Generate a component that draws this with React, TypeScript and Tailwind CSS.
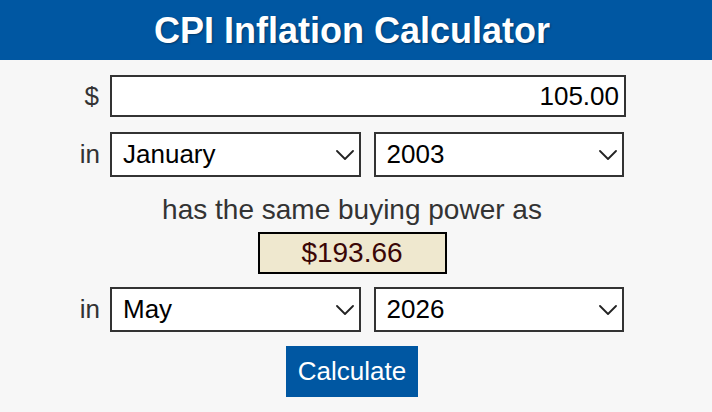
import React, { useState } from 'react';

const months = [
  'January', 'February', 'March', 'April', 'May', 'June',
  'July', 'August', 'September', 'October', 'November', 'December',
];

const years = Array.from({ length: 2026 - 1913 + 1 }, (_, i) => String(2026 - i));

const Chevron = () => (
  <svg
    className="pointer-events-none absolute right-[7px] top-1/2 -translate-y-1/2"
    width="18"
    height="10"
    viewBox="0 0 18 10"
    fill="none"
  >
    <path d="M1 1l8 8 8-8" stroke="#222" strokeWidth="1.8" strokeLinecap="round" strokeLinejoin="round" />
  </svg>
);

interface PickerProps {
  value: string;
  options: string[];
  onChange: (v: string) => void;
}

const Picker: React.FC<PickerProps> = ({ value, options, onChange }) => (
  <div className="relative flex-1">
    <select
      value={value}
      onChange={(e) => onChange(e.target.value)}
      className="block h-[45px] w-full appearance-none rounded-none border-2 border-[#333] bg-white pl-[11px] text-[26px] text-black outline-none"
    >
      {options.map((o) => (
        <option key={o} value={o}>{o}</option>
      ))}
    </select>
    <Chevron />
  </div>
);

export default function App() {
  const [amount, setAmount] = useState('105.00');
  const [fromMonth, setFromMonth] = useState('January');
  const [fromYear, setFromYear] = useState('2003');
  const [toMonth, setToMonth] = useState('May');
  const [toYear, setToYear] = useState('2026');

  return (
    <div className="min-h-[412px] w-[712px] bg-[#f7f7f7] font-['Liberation_Sans',Arial,sans-serif]">
      <header className="flex h-[60px] items-center justify-center bg-[#0057a2] pr-[8px] pt-[2px]">
        <h1 className="text-[36px] font-bold leading-none text-white [text-shadow:1px_1px_2px_rgba(0,0,0,0.35)]">
          CPI Inflation Calculator
        </h1>
      </header>

      <main className="flex w-[704px] flex-col items-center pt-[15px]">
        {/* amount */}
        <div className="mr-[8px] flex w-[556px] items-center">
          <span className="w-[30px] pr-[1px] text-right text-[26px] text-[#333]">$</span>
          <input
            value={amount}
            onChange={(e) => setAmount(e.target.value)}
            className="ml-[10px] h-[42px] flex-1 rounded-none border-2 border-[#333] bg-white pr-[5px] text-right text-[26px] text-black outline-none"
          />
        </div>

        {/* from date */}
        <div className="mr-[8px] mt-[15px] flex w-[556px] items-center">
          <span className="w-[30px] text-right text-[26px] text-[#333]">in</span>
          <div className="ml-[10px] mr-[2px] flex flex-1 gap-[13px]">
            <Picker value={fromMonth} options={months} onChange={setFromMonth} />
            <Picker value={fromYear} options={years} onChange={setFromYear} />
          </div>
        </div>

        <p className="mt-[17px] text-[28px] leading-[32px] text-[#333]">has the same buying power as</p>

        <div className="mt-[6px] flex h-[42px] w-[189px] items-center justify-center border-2 border-black bg-[#efe8cf] text-[28px] text-[#3a0606]">
          $193.66
        </div>

        {/* to date */}
        <div className="mr-[8px] mt-[13px] flex w-[556px] items-center">
          <span className="w-[30px] text-right text-[26px] text-[#333]">in</span>
          <div className="ml-[10px] mr-[2px] flex flex-1 gap-[13px]">
            <Picker value={toMonth} options={months} onChange={setToMonth} />
            <Picker value={toYear} options={years} onChange={setToYear} />
          </div>
        </div>

        <button className="mt-[14px] h-[51px] w-[132px] bg-[#0057a2] text-[26px] text-white">
          Calculate
        </button>
      </main>
    </div>
  );
}
